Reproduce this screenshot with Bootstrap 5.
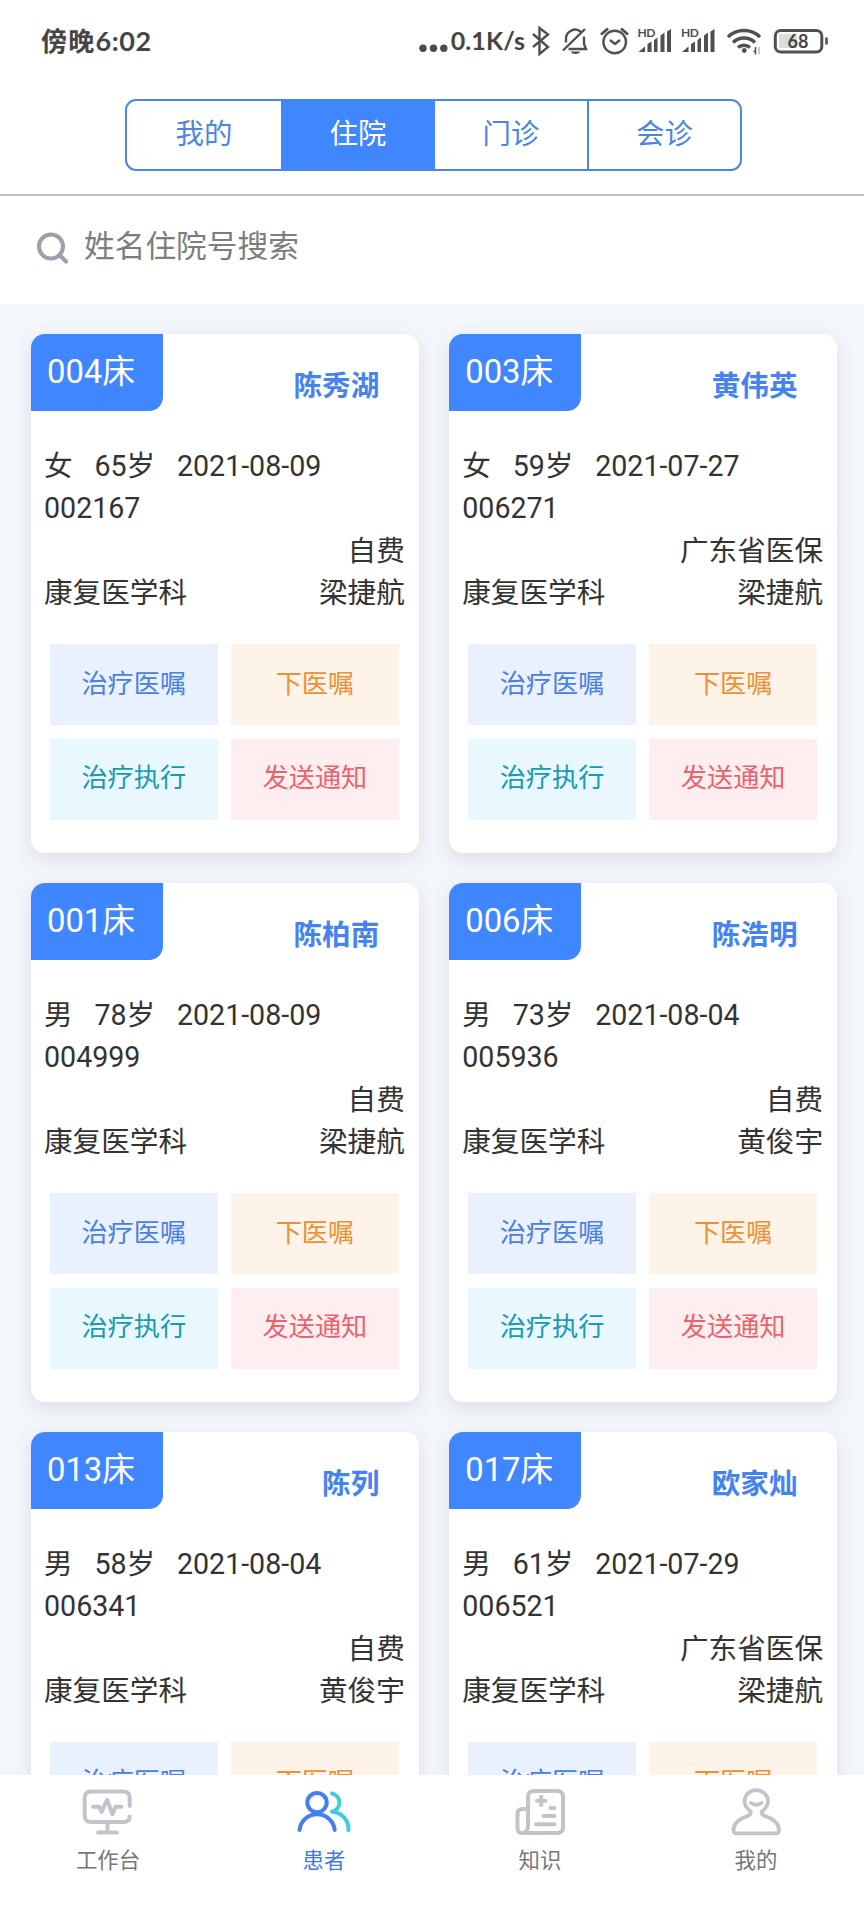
<!DOCTYPE html>
<html lang="zh-CN">
<head>
<meta charset="utf-8">
<meta name="viewport" content="width=device-width, initial-scale=1">
<title>患者 - 住院</title>
<link href="https://cdn.jsdelivr.net/npm/bootstrap@5.3.0/dist/css/bootstrap.min.css" rel="stylesheet">
<style>
:root{--blue:#4086ff;--ink:#333}
body{font-family:Roboto,"Noto Sans CJK SC",sans-serif;color:var(--ink);background:#fff}
.status-bar{height:80px;color:#454545;font-family:Lato,"Noto Sans CJK SC",sans-serif;font-weight:700}
.clock{padding:3px 0 0 41px;font-size:27px;letter-spacing:.6px}
.clock .zh{font-size:26px;letter-spacing:1.2px;font-weight:700}
.net-speed{font-size:25px;letter-spacing:.1px;margin-right:5px;padding-top:2px}
.status-bar svg text{font-family:Lato,sans-serif}
.tab-bar{height:116px;padding:19px 122px 0 125px;border-bottom:2px solid #bdc3c9}
.segment{height:72px;border:2px solid #4a86e6;border-radius:11px;overflow:hidden;display:grid;grid-template-columns:154px 154px 152px 1fr}
.segment .nav-link{color:#4a86e0;font-size:28.4px;line-height:68px;border-radius:0;padding:0;text-align:center}
.segment .nav-link.active{background:var(--blue);color:#fff}
.segment .nav-item:last-child{border-left:2px solid #4a86e6}
.search{height:108px;padding:0 0 5px 35px;color:#7d7d7d;font-size:30.7px}
.search .label{margin-left:13px}
.wards{background:#f3f6fb;padding:30px 27px 0 31px}
.ward-grid{display:grid;grid-template-columns:1fr 1fr;gap:30px 30.500px}
.patient{height:519px;border:0;border-radius:14px;box-shadow:0 6px 18px rgba(60,70,90,.13)}
.patient-head{height:111px;padding-right:39.500px}
.bed{width:132px;height:77px;background:var(--blue);color:#fff;font-size:32.8px;line-height:76px;padding-left:16px;border-radius:14px 0 14px 0}
.patient-name{color:#4584ee;font-size:28.6px;font-weight:700;line-height:40px;margin-top:32px}
.info{font-size:28.6px;line-height:42.3px;padding:0 14px 0 13px}
.info .basic{gap:21.8px}
.actions{display:grid;grid-template-columns:1fr 1fr;gap:13.5px;grid-auto-rows:81px;padding:0 20px 0 19px;margin-top:30px}
.actions .btn{border:0;border-radius:0;font-size:26.2px;padding:0 0 1px}
.act-order{background:#e9f1fe;color:#4a80e0}
.act-new{background:#fef3e9;color:#ea9136}
.act-run{background:#e8f8fe;color:#1899b4}
.act-send{background:#feeeef;color:#ea626c}
.tabs-bottom{height:145px;background:#fff}
.tabs-bottom a{color:#777;font-size:21.4px;text-decoration:none;line-height:30px;padding-top:10px}
.tabs-bottom a.on{color:#4478e4}
.tabs-bottom svg{display:block;margin-bottom:6px}
</style>
</head>
<body class="vh-100 overflow-hidden d-flex flex-column">

<header class="status-bar d-flex align-items-center flex-shrink-0">
  <div class="clock"><span class="zh">傍晚</span>6:02</div>
  <svg class="ms-auto" width="34" height="80" viewBox="416 0 34 80" fill="#4b4b4b"><circle cx="422" cy="48.3" r="3.7"/><circle cx="432.5" cy="48.3" r="3.7"/><circle cx="442.8" cy="48.3" r="3.7"/></svg>
  <div class="net-speed">0.1K/s</div>
  <svg width="334" height="80" viewBox="530 0 334 80" fill="none" stroke="#505050" stroke-width="2.4">
    <!-- bluetooth -->
    <path d="M533 34l15 13-8.500 7V28l8.500 6.500-15 12.500"/>
    <!-- muted bell -->
    <path d="M563 50.500l22-21.500M566 42.500V39a9 9 0 0 1 15-7M584 36.500V44l2 5h-17.500"/>
    <path d="M571 51.500h9a4.500 2.500 0 0 1-9 0z" fill="#505050" stroke="none"/>
    <!-- alarm -->
    <circle cx="614.700" cy="42" r="11.300"/><path d="M610 40l5 4 5-4" stroke-width="2.500"/><path d="M601 34.500l7-6M621 28.500l7 6" stroke-width="2.800"/>
    <!-- signal x2 -->
    <g stroke="none" fill="#505050"><path d="M638.500 52l6.500-5.500V52zM647.500 52v-8l4-2.500V52zM654 52V40l3.500-2.500V52zM660.500 52V35.500l4-3V52zM667 52V31.500l4-2.500V52z"/><text x="637.500" y="36.500" font-size="12" font-weight="700" textLength="18">HD</text></g>
    <g transform="translate(43.500 0)" stroke="none" fill="#505050"><path d="M638.500 52l6.500-5.500V52zM647.500 52v-8l4-2.500V52zM654 52V40l3.500-2.500V52zM660.500 52V35.500l4-3V52zM667 52V31.500l4-2.500V52z"/><text x="637.500" y="36.500" font-size="12" font-weight="700" textLength="18">HD</text></g>
    <!-- wifi -->
    <g stroke-width="3.500"><path d="M728 37a23 23 0 0 1 32 0M733 42.500a16 16 0 0 1 22 0M738 47.500a9 9 0 0 1 12 0"/><circle cx="744.300" cy="50.500" r="2.400" fill="#505050" stroke="none"/><path d="M755.500 47v7.500M753.500 51.500h2" stroke-width="1.500"/><path d="M759 54v-7" stroke="#bbb" stroke-width="1.500"/></g>
    <!-- battery -->
    <rect x="779" y="34" width="18" height="14" fill="#dcdcdc" stroke="none"/>
    <rect x="775.300" y="30.500" width="46.500" height="21.500" rx="5.500" stroke-width="3"/>
    <path d="M826.500 37.500v7" stroke-width="2.600"/>
    <text x="787.500" y="47.500" font-size="18" font-weight="700" fill="#454545" stroke="none" textLength="21">68</text>
  </svg>
</header>

<div class="tab-bar flex-shrink-0">
  <ul class="nav segment">
    <li class="nav-item"><a class="nav-link" href="#">我的</a></li>
    <li class="nav-item"><a class="nav-link active" href="#">住院</a></li>
    <li class="nav-item"><a class="nav-link" href="#">门诊</a></li>
    <li class="nav-item"><a class="nav-link" href="#">会诊</a></li>
  </ul>
</div>

<div class="search d-flex align-items-center flex-shrink-0">
  <svg width="36" height="36" viewBox="0 0 36 36" fill="none" stroke="#99a1aa" stroke-width="4" stroke-linecap="round"><circle cx="16" cy="16.500" r="12"/><path d="M25 25.500l6 6"/></svg>
  <span class="label">姓名住院号搜索</span>
</div>

<main class="wards flex-grow-1 overflow-hidden" style="min-height:0"><div class="ward-grid" id="wards"></div></main>

<nav class="tabs-bottom d-flex flex-shrink-0">
  <a href="#" class="w-25 d-flex flex-column align-items-center">
    <svg width="60" height="55" viewBox="78 1785 60 55" fill="none" stroke="#c0c5cc" stroke-width="4" stroke-linecap="round" stroke-linejoin="round"><path d="M129.700 1806v-8q0-6.500-6.500-6.500h-32q-6.500 0-6.500 6.500v17.500q0 6.500 6.500 6.500h32q6.500 0 6.500-5.500M107.500 1822v10M98 1832.500h19M93 1806.800h6l2.500 5 5.500-12 5.500 14.500 3-7.500h6"/></svg>
    <span>工作台</span></a>
  <a href="#" class="on w-25 d-flex flex-column align-items-center">
    <svg width="60" height="55" viewBox="294 1785 60 55" fill="none" stroke-width="4" stroke-linecap="round"><path stroke="#3fcbe4" d="M332 1793.500a9.300 9.300 0 0 1 0 18.200M332 1811.700a17.500 17.500 0 0 1 16.500 18.300"/><g stroke="#447ff2"><circle cx="317" cy="1802.600" r="9.700"/><path d="M299.500 1830a17.700 17.700 0 0 1 35.200 0"/></g></svg>
    <span>患者</span></a>
  <a href="#" class="w-25 d-flex flex-column align-items-center">
    <svg width="60" height="55" viewBox="510 1785 60 55" fill="none" stroke="#c0c5cc" stroke-width="4" stroke-linecap="round" stroke-linejoin="round"><path d="M528 1828v-31q0-6 6-6h23q6 0 6 6v30q0 6-6 6h-35.500q-4 0-4-5v-14q0-5 5-5h5.500M528 1825q0 8-5.500 8M537 1800.700h8.500M541.200 1796.500v8.500M550.500 1808h4M543.500 1816h11M536 1824.200h18.500"/></svg>
    <span>知识</span></a>
  <a href="#" class="w-25 d-flex flex-column align-items-center">
    <svg width="60" height="55" viewBox="726 1785 60 55" fill="none" stroke="#c0c5cc" stroke-width="3.800" stroke-linecap="round" stroke-linejoin="round"><path d="M750.500 1811.500c1 2.300-.8 3.700-3 4.500-8.500 3-14 7.500-14 14q0 3.300 2.500 3.300h40.500q2.500 0 2.500-3.300c0-6.500-5.500-11-14-14-2.200-.8-4-2.200-3-4.500 3.500-3 6-5.500 6-10a11.750 11.400 0 0 0-23.500 0c0 4.500 2.500 7 6 10zM751 1803q5.300 3.500 10.600 0"/></svg>
    <span>我的</span></a>
</nav>

<script>
const patients = [
  ['004', '陈秀湖', '女', 65, '2021-08-09', '002167', '自费', '梁捷航'],
  ['003', '黄伟英', '女', 59, '2021-07-27', '006271', '广东省医保', '梁捷航'],
  ['001', '陈柏南', '男', 78, '2021-08-09', '004999', '自费', '梁捷航'],
  ['006', '陈浩明', '男', 73, '2021-08-04', '005936', '自费', '黄俊宇'],
  ['013', '陈列', '男', 58, '2021-08-04', '006341', '自费', '黄俊宇'],
  ['017', '欧家灿', '男', 61, '2021-07-29', '006521', '广东省医保', '梁捷航']
];
document.getElementById('wards').innerHTML = patients.map(([bed, name, sex, age, date, no, pay, doctor]) => `
  <article class="card patient">
    <div class="patient-head d-flex justify-content-between"><div class="bed">${bed}床</div><div class="patient-name">${name}</div></div>
    <div class="info">
      <div class="basic d-flex"><span>${sex}</span><span>${age}岁</span><span>${date}</span></div>
      <div>${no}</div>
      <div class="text-end">${pay}</div>
      <div class="d-flex justify-content-between"><span>康复医学科</span><span>${doctor}</span></div>
    </div>
    <div class="actions">
      <button class="btn act-order">治疗医嘱</button><button class="btn act-new">下医嘱</button>
      <button class="btn act-run">治疗执行</button><button class="btn act-send">发送通知</button>
    </div>
  </article>`).join('');
</script>
<script src="https://cdn.jsdelivr.net/npm/bootstrap@5.3.0/dist/js/bootstrap.bundle.min.js"></script>
</body>
</html>
